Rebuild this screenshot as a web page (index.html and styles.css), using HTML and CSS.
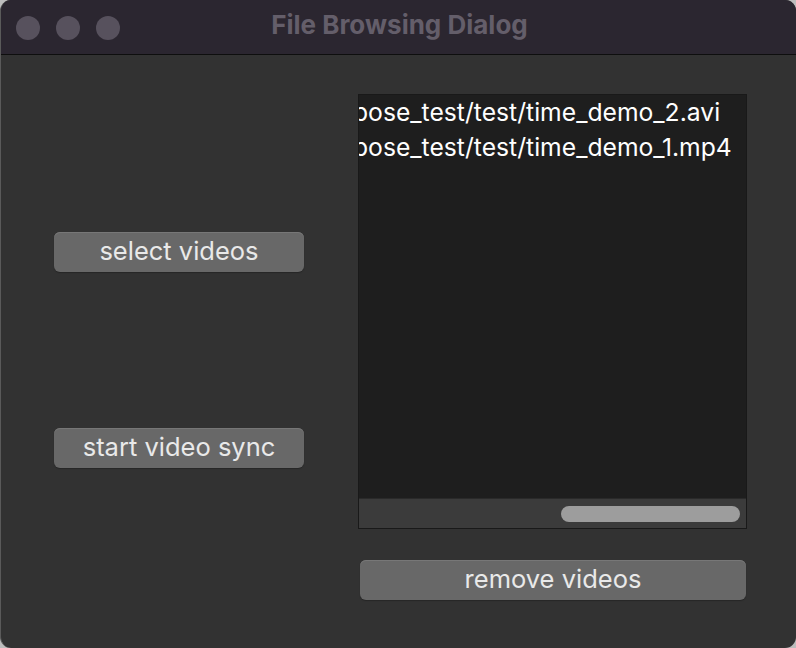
FILE: index.html
```html
<!DOCTYPE html>
<html>
<head>
<meta charset="utf-8">
<link rel="stylesheet" href="styles.css">
</head>
<body>
<div class="window">
  <div class="titlebar">
    <div class="lights">
      <span class="light"></span>
      <span class="light"></span>
      <span class="light"></span>
    </div>
    <div class="title">File Browsing Dialog</div>
  </div>
  <div class="content">
    <div class="left-col">
      <button class="btn">select videos</button>
      <button class="btn second">start video sync</button>
    </div>
    <div class="right-col">
      <div class="list">
        <div class="list-items">
          <div class="item">pose_test/test/time_demo_2.avi</div>
          <div class="item">pose_test/test/time_demo_1.mp4</div>
        </div>
        <div class="hscroll"><div class="thumb"></div></div>
      </div>
      <button class="btn remove">remove videos</button>
    </div>
  </div>
</div>
</body>
</html>
```

FILE: styles.css
```css
html, body {
  margin: 0;
  padding: 0;
  width: 796px;
  height: 648px;
  background: #bdbdbd;
  overflow: hidden;
}
.window {
  width: 796px;
  height: 648px;
  box-sizing: border-box;
  border-radius: 11px;
  background: #323232;
  overflow: hidden;
  border-left: 1px solid #5a5a5a;
  font-family: Inter, "Noto Sans", sans-serif;
}
.titlebar {
  height: 54px;
  background: #2b2630;
  border-bottom: 1px solid #0e0e0e;
  display: flex;
  align-items: center;
  position: relative;
}
.lights {
  display: flex;
  gap: 16px;
  padding-left: 15px;
  padding-top: 2px;
}
.light {
  width: 24px;
  height: 24px;
  border-radius: 50%;
  background: #57515d;
}
.title {
  position: absolute;
  left: 0;
  right: 0;
  top: 0;
  line-height: 50px;
  text-align: center;
  font-weight: 700;
  font-size: 26px;
  color: #645e6a;
  padding-left: 2px;
}
.content {
  display: flex;
  padding-left: 53px;
}
.left-col {
  width: 250px;
  display: flex;
  flex-direction: column;
  padding-top: 177px;
}
.btn {
  height: 40px;
  width: 250px;
  border: none;
  border-radius: 6px;
  background: #686868;
  box-shadow: inset 0 1px 0 #777, 0 1px 1px #262626;
  color: #e9e9e9;
  font-family: Inter, "Noto Sans", sans-serif;
  font-size: 25.5px;
  padding: 0 0 3px 0;
  margin: 0;
}
.second {
  margin-top: 156px;
}
.right-col {
  margin-left: 54px;
  width: 389px;
  padding-top: 39px;
  display: flex;
  flex-direction: column;
}
.list {
  height: 435px;
  box-sizing: border-box;
  border: 1px solid #191919;
  background: #1e1e1e;
  display: flex;
  flex-direction: column;
}
.list-items {
  flex: 1;
  overflow: hidden;
  padding-top: 0;
}
.item {
  white-space: nowrap;
  color: #ffffff;
  font-size: 24.7px;
  line-height: 35px;
  margin-left: -6px;
}
.hscroll {
  height: 29px;
  background: #3b3b3b;
  border-top: 1px solid #2a2a2a;
  position: relative;
}
.thumb {
  position: absolute;
  left: 202px;
  width: 179px;
  top: 7px;
  height: 16px;
  border-radius: 8px;
  background: #9d9d9d;
}
.remove {
  margin-top: 31px;
  margin-left: 2px;
  width: 386px;
}
```
